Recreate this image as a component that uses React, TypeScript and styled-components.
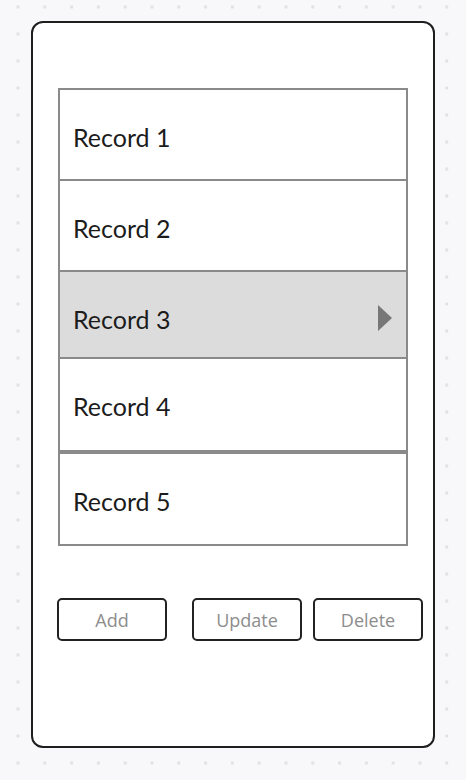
import React from "react";
import styled, { createGlobalStyle } from "styled-components";

const Global = createGlobalStyle`
  html, body { margin: 0; padding: 0; }
  body {
    width: 466px;
    height: 780px;
    overflow: hidden;
    background-color: #f8f8fa;
    background-image: radial-gradient(circle, #e2e2e6 1.4px, transparent 1.9px);
    background-size: 26.8px 27px;
    background-position: 4.6px -6.5px;
    font-family: "Lato", "Liberation Sans", sans-serif;
  }
`;

const Page = styled.div`
  padding: 21px 0 0 31px;
`;

const Card = styled.div`
  box-sizing: border-box;
  width: 404px;
  height: 727px;
  border: 2px solid #1e1e1e;
  border-radius: 12px;
  background: #ffffff;
  padding: 65px 25px 0 25px;
  display: flex;
  flex-direction: column;
`;

const List = styled.div`
  display: flex;
  flex-direction: column;
  width: 350px;
`;

const Row = styled.div<{ $h: number; $dy: number; $selected?: boolean; $overlap: boolean }>`
  box-sizing: border-box;
  height: ${(p) => p.$h}px;
  margin-top: ${(p) => (p.$overlap ? "-2px" : "0")};
  border: 2px solid #8a8a8a;
  background: ${(p) => (p.$selected ? "#dcdcdc" : "#ffffff")};
  display: flex;
  align-items: center;
  justify-content: space-between;
  padding: ${(p) => p.$dy}px 14px 0 13px;
  font-family: "Lato", "Liberation Sans", sans-serif;
  font-size: 25px;
  color: #1c1c1c;
`;

const Arrow = styled.div`
  width: 0;
  height: 0;
  border-top: 13px solid transparent;
  border-bottom: 13px solid transparent;
  border-left: 14px solid #777777;
  margin-top: -2px;
`;

const Buttons = styled.div`
  display: flex;
  margin-top: 52px;
  margin-left: -1px;
`;

const Button = styled.button<{ $gap: number }>`
  box-sizing: border-box;
  flex: 0 0 110px;
  width: 110px;
  height: 43px;
  margin-left: ${(p) => p.$gap}px;
  border: 2px solid #222222;
  border-radius: 5px;
  background: #ffffff;
  color: #8d8d8d;
  font-family: "Open Sans", "Liberation Sans", sans-serif;
  font-size: 18px;
  padding: 0;
  cursor: pointer;
`;

const rows = [
  { label: "Record 1", h: 93, dy: 4 },
  { label: "Record 2", h: 93, dy: 5 },
  { label: "Record 3", h: 89, dy: 8, selected: true },
  { label: "Record 4", h: 95, dy: 3 },
  { label: "Record 5", h: 94, dy: 4, noOverlap: true },
];

export default function App() {
  return (
    <>
      <Global />
      <Page>
        <Card>
          <List>
            {rows.map((r, i) => (
              <Row
                key={r.label}
                $h={r.h}
                $dy={r.dy}
                $selected={r.selected}
                $overlap={i > 0 && !r.noOverlap}
              >
                <span>{r.label}</span>
                {r.selected && <Arrow />}
              </Row>
            ))}
          </List>
          <Buttons>
            <Button $gap={0}>Add</Button>
            <Button $gap={25}>Update</Button>
            <Button $gap={11}>Delete</Button>
          </Buttons>
        </Card>
      </Page>
    </>
  );
}
